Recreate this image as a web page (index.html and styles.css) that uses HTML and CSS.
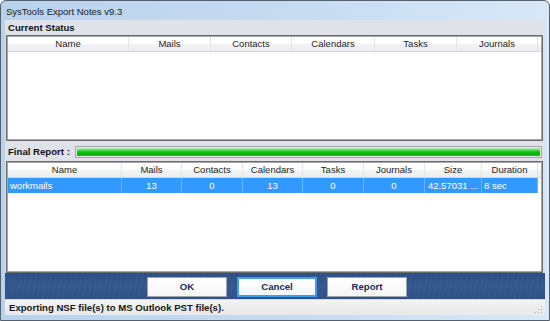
FILE: index.html
```html
<!DOCTYPE html>
<html lang="en">
<head>
  <meta charset="UTF-8" />
  <title>SysTools Export Notes v9.3</title>
  <link rel="stylesheet" href="styles.css">
</head>
<body>
  <div class="window">
    <div class="titlebar">SysTools Export Notes v9.3</div>

    <div class="client">
      <div class="section-label">Current Status</div>
      <div class="listview lv-status">
        <div class="lv-head cols-status">
          <div class="col">Name</div>
          <div class="col">Mails</div>
          <div class="col">Contacts</div>
          <div class="col">Calendars</div>
          <div class="col">Tasks</div>
          <div class="col">Journals</div>
          <div class="col filler"></div>
        </div>
      </div>

      <div class="report-row">
        <span class="section-label">Final Report :</span>
        <div class="progress"><div class="progress-fill"></div></div>
      </div>

      <div class="listview lv-report">
        <div class="lv-head cols-report">
          <div class="col">Name</div>
          <div class="col">Mails</div>
          <div class="col">Contacts</div>
          <div class="col">Calendars</div>
          <div class="col">Tasks</div>
          <div class="col">Journals</div>
          <div class="col">Size</div>
          <div class="col">Duration</div>
          <div class="col filler"></div>
        </div>
        <div class="lv-row selected cols-report">
          <div class="cell left">workmails</div>
          <div class="cell">13</div>
          <div class="cell">0</div>
          <div class="cell">13</div>
          <div class="cell">0</div>
          <div class="cell">0</div>
          <div class="cell">42.57031 ...</div>
          <div class="cell left">8 sec</div>
          <div class="cell empty"></div>
        </div>
      </div>

      <div class="button-bar">
        <button class="btn">OK</button>
        <button class="btn focused">Cancel</button>
        <button class="btn">Report</button>
      </div>

      <div class="statusbar">
        <span>Exporting NSF file(s) to MS Outlook PST file(s).</span>
        <svg class="grip" width="8" height="8" viewBox="0 0 8 8">
          <rect x="6" y="0" width="1" height="1" fill="#a4a4a4"/>
          <rect x="3" y="3" width="1" height="1" fill="#a4a4a4"/>
          <rect x="6" y="3" width="1" height="1" fill="#a4a4a4"/>
          <rect x="0" y="6" width="1" height="1" fill="#a4a4a4"/>
          <rect x="3" y="6" width="1" height="1" fill="#a4a4a4"/>
          <rect x="6" y="6" width="1" height="1" fill="#a4a4a4"/>
        </svg>
      </div>
    </div>
  </div>
</body>
</html>
```

FILE: styles.css
```css
* {
  box-sizing: border-box;
}

body {
  margin: 0;
  width: 550px;
  height: 321px;
  overflow: hidden;
  background: #ffffff;
  font-family: "Liberation Sans", Arial, sans-serif;
  color: #111;
}

.window {
  width: 550px;
  height: 321px;
  display: flex;
  flex-direction: column;
  padding: 0 4px 5px;
  border: 1px solid #56606c;
  border-radius: 6px 6px 0 0;
  background: linear-gradient(90deg, #b9d2ec 0%, #c6dcf3 55%, #d8e8f8 100%);
}

.titlebar {
  height: 19px;
  display: flex;
  align-items: center;
  padding: 1px 0 0 1px;
  font-size: 9.5px;
  color: #1b1b1b;
}

.client {
  flex: 1;
  display: flex;
  flex-direction: column;
  background-color: #dfe2e8;
}

.section-label {
  height: 15px;
  line-height: 16px;
  padding-left: 3px;
  font-size: 9.6px;
  font-weight: bold;
  color: #111;
}

/* list views */
.listview {
  margin: 0 2px 0 1px;
  background-color: #fff;
  border: 1px solid #6c6c6c;
  box-shadow: inset 1px 1px 0 #a8a8a8, inset -1px -1px 0 #a8a8a8;
  padding: 1px;
  overflow: hidden;
}

.lv-status {
  height: 106px;
}

.lv-report {
  height: 112px;
}

.cols-status {
  display: grid;
  grid-template-columns: 121px 82px 81px 83px 82px 81px 1fr;
}

.cols-report {
  display: grid;
  grid-template-columns: 114px 60px 61px 60px 61px 61px 57px 56px 1fr;
}

.lv-head {
  height: 15px;
  background: linear-gradient(#ffffff 0%, #ffffff 45%, #f1f2f4 55%, #eceef1 100%);
  border-bottom: 1px solid #d5d5d5;
}

.lv-head .col {
  font-size: 9.5px;
  line-height: 14px;
  text-align: center;
  color: #1e1e1e;
  border-right: 1px solid #e3e4e6;
  white-space: nowrap;
  overflow: hidden;
}

.lv-head .filler {
  border-right: none;
}

.lv-row {
  height: 15px;
}

.lv-row .cell {
  font-size: 9.5px;
  line-height: 15px;
  text-align: center;
  white-space: nowrap;
  overflow: hidden;
  border-right: 1px solid rgba(255, 255, 255, 0.28);
}

.lv-row .left {
  text-align: left;
  padding-left: 2px;
}

.selected .cell {
  background-color: #3399ff;
  color: #fff;
}

.selected .empty {
  background-color: #fff;
  border-right: none;
}

/* final report */
.report-row {
  height: 20px;
  display: flex;
  align-items: center;
}

.report-row .section-label {
  width: 70px;
  line-height: 15px;
}

.progress {
  width: 467px;
  height: 12px;
  margin-top: 1px;
  border: 1px solid #a6a6a6;
  background-color: #e6e6e6;
  padding: 1px;
}

.progress-fill {
  height: 100%;
  background: linear-gradient(#c4f2c4 0%, #55d455 28%, #0cc40c 50%, #0aae0a 78%, #23b823 100%);
}

/* buttons */
.button-bar {
  height: 26px;
  display: flex;
  justify-content: center;
  align-items: center;
  gap: 10px;
  padding-left: 4px;
  background:
    repeating-linear-gradient(100deg, rgba(255, 255, 255, 0.015) 0 2px, rgba(0, 0, 0, 0.015) 2px 5px),
    linear-gradient(#2d4f87, #35588f 50%, #2f5188);
}

.btn {
  width: 80px;
  height: 20px;
  margin-top: 1px;
  padding: 0;
  background: linear-gradient(#ffffff, #f6f6f6);
  border: 1px solid #9aa4b2;
  font-family: "Liberation Sans", Arial, sans-serif;
  font-size: 9.6px;
  font-weight: bold;
  color: #1d2b5a;
}

.btn.focused {
  border: 2px solid #3d9fe8;
}

/* status bar */
.statusbar {
  height: 16px;
  display: flex;
  align-items: center;
  justify-content: space-between;
  padding: 0 2px 0 4px;
  background: linear-gradient(#f3f3f3, #e9e9e9);
  border-top: 1px solid #d9d9d9;
  font-size: 9.6px;
  font-weight: bold;
  color: #151515;
}

.grip {
  align-self: flex-end;
  margin-bottom: 1px;
}
```
